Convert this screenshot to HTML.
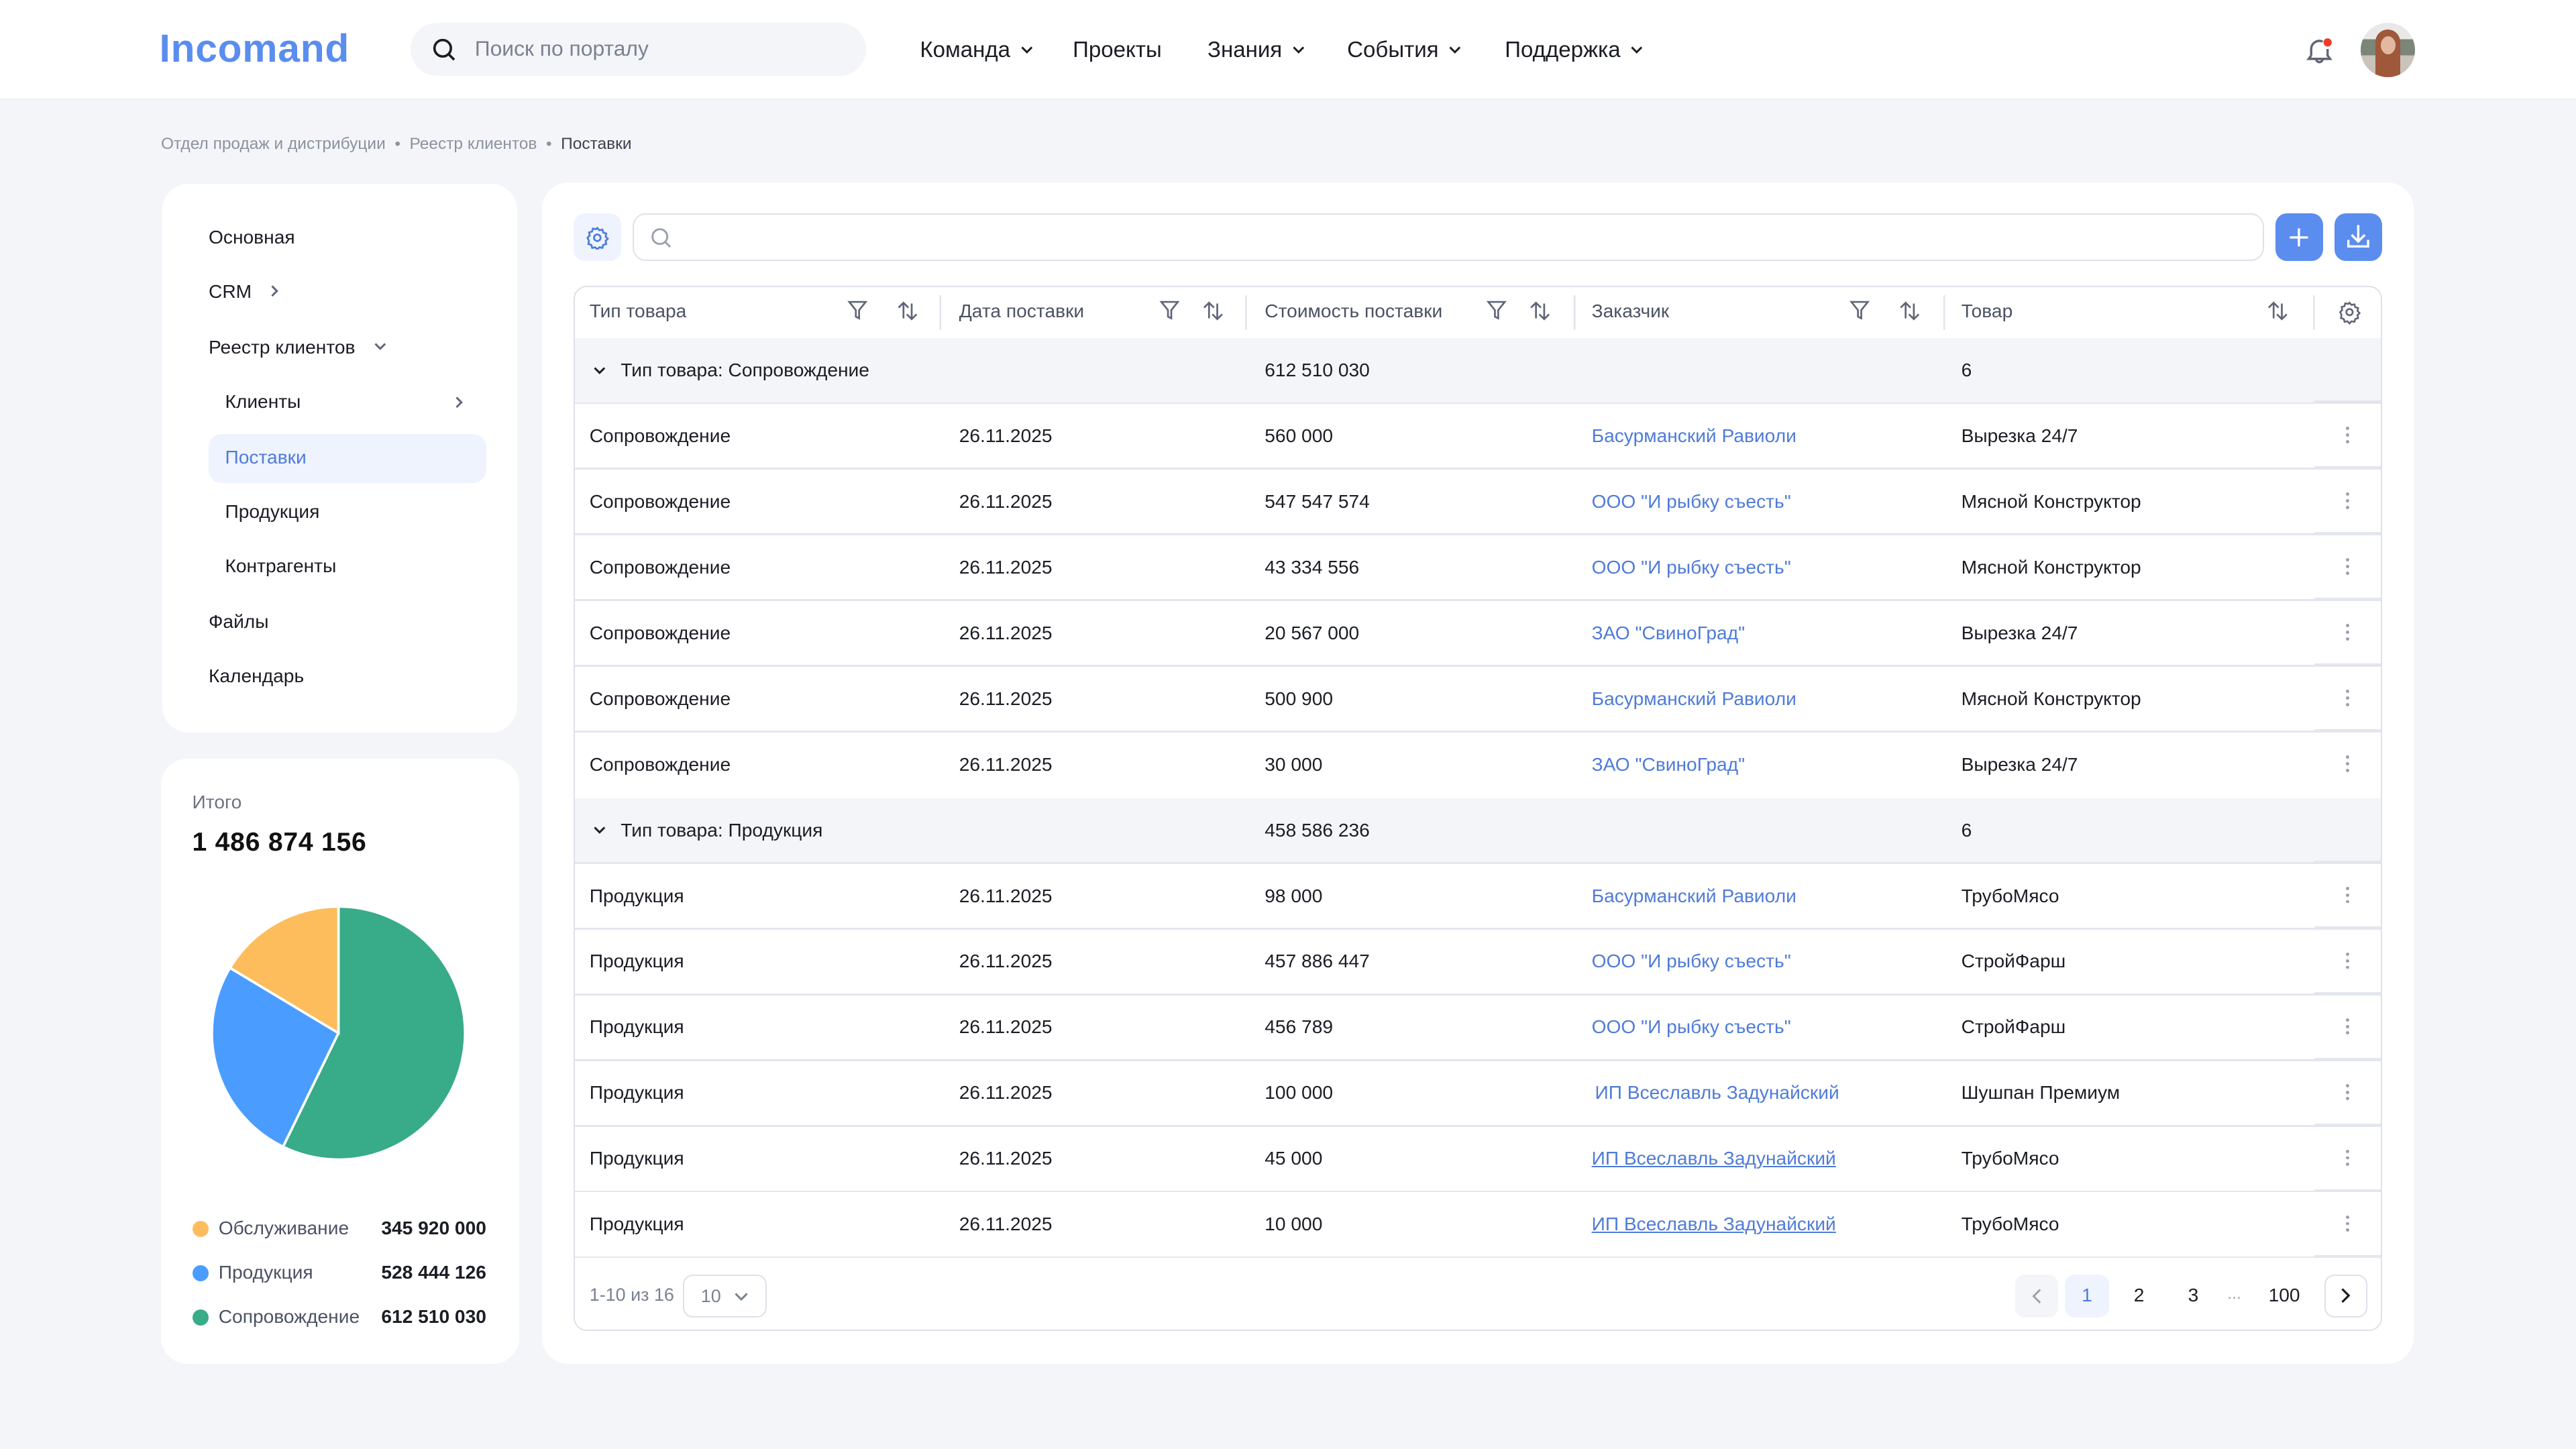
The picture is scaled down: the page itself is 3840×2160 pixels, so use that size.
<!DOCTYPE html>
<html><head><meta charset="utf-8">
<style>
html{zoom:2.44898}
*{box-sizing:border-box;margin:0;padding:0}
body{width:1568px;height:882px;background:#f4f5f9;font-family:"Liberation Sans","Noto Sans CJK SC",sans-serif;color:#1b1d24;position:relative;overflow:hidden}
.abs{position:absolute}
.hdr{left:0;top:0;width:1568px;height:61px;background:#fff;border-bottom:1px solid #eceef3}
.logo{left:97px;top:16px;font-size:24px;font-weight:bold;color:#5b8def;letter-spacing:0.3px}
.srch{left:250px;top:14px;width:277px;height:32px;background:#f4f5f9;border-radius:16px}
.srch span{position:absolute;left:39px;top:8px;font-size:13px;color:#7a8190}
.nav{top:23px;font-size:13.5px;color:#1b1d24}
.chev{display:inline-block;margin-left:6px;vertical-align:2px}
.card{background:#fff;border-radius:16px}
.bc{top:82px;left:98px;font-size:10px;color:#8b92a0}
.bc b{font-weight:normal;color:#3c4250}
.side div{position:absolute;font-size:11.5px;color:#1b1d24}
.tbl{left:349px;top:174px;width:1101px;height:636px;border:1px solid #dfe1ea;border-radius:8px;overflow:hidden;background:#fff}
.row{position:absolute;left:0;width:1101px;height:40px;font-size:11.5px}
.row div{position:absolute;top:13px}
.ln{position:absolute;left:0;width:1059px;height:1px;background:#e4e6ee}
.ln2{position:absolute;left:1059px;width:42px;height:2px;background:#e4e6ee}
.lnk{color:#4f7bd9}
.dots{left:1078px;top:14px!important;width:3px}
.dots i{display:block;width:2px;height:2px;border-radius:1px;background:#9aa0ad;margin-bottom:2px}
.hd{position:absolute;top:8px;font-size:11.5px;color:#4b5263}
</style></head><body>
<div class="abs hdr"></div>
<div class="abs logo">Incomand</div>
<div class="abs srch"><svg class="abs" style="left:13px;top:9px" width="15" height="15" viewBox="0 0 15 15"><circle cx="6.5" cy="6.5" r="5" fill="none" stroke="#1b1d24" stroke-width="1.5"/><path d="M10 10l3.5 3.5" stroke="#1b1d24" stroke-width="1.5"/></svg><span>Поиск по порталу</span></div>
<div class="abs nav" style="left:560px">Команда<svg class="chev" width="8" height="5"><path d="M1 1l3 3 3-3" fill="none" stroke="#1b1d24" stroke-width="1.2"/></svg></div>
<div class="abs nav" style="left:653px">Проекты</div>
<div class="abs nav" style="left:735px">Знания<svg class="chev" width="8" height="5"><path d="M1 1l3 3 3-3" fill="none" stroke="#1b1d24" stroke-width="1.2"/></svg></div>
<div class="abs nav" style="left:820px">События<svg class="chev" width="8" height="5"><path d="M1 1l3 3 3-3" fill="none" stroke="#1b1d24" stroke-width="1.2"/></svg></div>
<div class="abs nav" style="left:916px">Поддержка<svg class="chev" width="8" height="5"><path d="M1 1l3 3 3-3" fill="none" stroke="#1b1d24" stroke-width="1.2"/></svg></div>
<svg class="abs" style="left:1402px;top:21px" width="20" height="20" viewBox="0 0 20 20"><path d="M5 13V9a5 5 0 0 1 7-4.5M15 9v4l1.5 2h-13L5 13" fill="none" stroke="#5f6677" stroke-width="1.4"/><path d="M8 15a2 2 0 0 0 4 0" fill="none" stroke="#5f6677" stroke-width="1.4"/><circle cx="15" cy="5" r="2.5" fill="#f0392b"/></svg>
<div class="abs" style="left:1437px;top:14px;width:33px;height:33px;border-radius:50%;background:linear-gradient(#e8e8e8 0 30%,#7d8478 30% 60%,#c9c3bb 60%);overflow:hidden"><div style="position:absolute;left:9px;top:4px;width:15px;height:30px;border-radius:8px 8px 0 0;background:#a0583a"></div><div style="position:absolute;left:12px;top:8px;width:9px;height:11px;border-radius:50%;background:#e2b8a0"></div></div>

<div class="abs bc">Отдел продаж и дистрибуции &nbsp;•&nbsp; Реестр клиентов &nbsp;•&nbsp; <b>Поставки</b></div>

<div class="abs card side" style="left:99px;top:112px;width:216px;height:334px">
<div style="left:28px;top:26px">Основная</div>
<div style="left:28px;top:59px">CRM <svg style="margin-left:8px" width="6" height="8"><path d="M1 1l3 3-3 3" fill="none" stroke="#5f6677" stroke-width="1.2"/></svg></div>
<div style="left:28px;top:93px">Реестр клиентов <svg style="margin-left:8px;vertical-align:1px" width="8" height="6"><path d="M1 1l3 3 3-3" fill="none" stroke="#5f6677" stroke-width="1.2"/></svg></div>
<div style="left:38px;top:126px">Клиенты</div>
<svg class="abs" style="left:178px;top:129px" width="6" height="8"><path d="M1 1l3 3-3 3" fill="none" stroke="#5f6677" stroke-width="1.2"/></svg>
<div style="left:28px;top:152px;width:169px;height:30px;background:#eef3fe;border-radius:8px"></div>
<div style="left:38px;top:160px;color:#4f7bd9">Поставки</div>
<div style="left:38px;top:193px">Продукция</div>
<div style="left:38px;top:226px">Контрагенты</div>
<div style="left:28px;top:260px">Файлы</div>
<div style="left:28px;top:293px">Календарь</div>
</div>

<div class="abs card" style="left:98px;top:462px;width:218px;height:368px">
<div class="abs" style="left:19px;top:20px;font-size:11.5px;color:#6b7280">Итого</div>
<div class="abs" style="left:19px;top:42px;font-size:16px;font-weight:bold;color:#111;letter-spacing:0.3px">1 486 874 156</div>
<svg class="abs" style="left:0;top:0" width="218" height="260" viewBox="98 462 218 260">
<path d="M206,629 L206,552 A77,77 0 1 1 172.3,698.2 Z" fill="#38ab88" stroke="#fff" stroke-width="1.5"/>
<path d="M206,629 L172.3,698.2 A77,77 0 0 1 140,589.3 Z" fill="#4a9dff" stroke="#fff" stroke-width="1.5"/>
<path d="M206,629 L140,589.3 A77,77 0 0 1 206,552 Z" fill="#fdbd5c" stroke="#fff" stroke-width="1.5"/>
</svg>
<div class="abs" style="left:19px;top:281px;width:10px;height:10px;border-radius:50%;background:#fdbd5c"></div>
<div class="abs" style="left:35px;top:279px;font-size:11.5px;color:#4b5263">Обслуживание</div>
<div class="abs" style="right:20px;top:279px;font-size:11.5px;font-weight:bold">345 920 000</div>
<div class="abs" style="left:19px;top:308px;width:10px;height:10px;border-radius:50%;background:#4a9dff"></div>
<div class="abs" style="left:35px;top:306px;font-size:11.5px;color:#4b5263">Продукция</div>
<div class="abs" style="right:20px;top:306px;font-size:11.5px;font-weight:bold">528 444 126</div>
<div class="abs" style="left:19px;top:335px;width:10px;height:10px;border-radius:50%;background:#38ab88"></div>
<div class="abs" style="left:35px;top:333px;font-size:11.5px;color:#4b5263">Сопровождение</div>
<div class="abs" style="right:20px;top:333px;font-size:11.5px;font-weight:bold">612 510 030</div>
</div>

<div class="abs card" style="left:330px;top:111px;width:1139px;height:719px"></div>
<div class="abs" style="left:349px;top:130px;width:29px;height:29px;border-radius:7px;background:#eef3fe"><svg class="abs" style="left:7px;top:7px" width="15" height="15" viewBox="0 0 24 24"><path d="M12 2.5l2 2.2 3-.6.8 2.9 2.9.9-.6 3 2.1 2.1-2.1 2.1.6 3-2.9.9-.8 2.9-3-.6-2 2.2-2-2.2-3 .6-.8-2.9-2.9-.9.6-3L2.5 12l2.1-2.1-.6-3 2.9-.9.8-2.9 3 .6z" fill="none" stroke="#4f7bd9" stroke-width="1.8"/><circle cx="12" cy="12" r="3.2" fill="none" stroke="#4f7bd9" stroke-width="1.8"/></svg></div>
<div class="abs" style="left:385px;top:130px;width:993px;height:29px;border:1px solid #dfe1ea;border-radius:8px;background:#fff"><svg class="abs" style="left:10px;top:7px" width="14" height="14"><circle cx="6" cy="6" r="4.5" fill="none" stroke="#9aa0ad" stroke-width="1.2"/><path d="M9.3 9.3l3 3" stroke="#9aa0ad" stroke-width="1.2"/></svg></div>
<div class="abs" style="left:1385px;top:130px;width:29px;height:29px;border-radius:7px;background:#5b8def"><svg class="abs" style="left:8px;top:8px" width="13" height="13"><path d="M6.5 1v11M1 6.5h11" stroke="#fff" stroke-width="1.4"/></svg></div>
<div class="abs" style="left:1421px;top:130px;width:29px;height:29px;border-radius:7px;background:#5b8def"><svg class="abs" style="left:7px;top:6px" width="15" height="16"><path d="M7.5 1v10M3.5 7l4 4 4-4M1.5 10v4h12v-4" fill="none" stroke="#fff" stroke-width="1.4"/></svg></div>

<div class="abs tbl">
<div class="hd" style="left:9px">Тип товара</div>
<div class="hd" style="left:234px">Дата поставки</div>
<div class="hd" style="left:420px">Стоимость поставки</div>
<div class="hd" style="left:619px">Заказчик</div>
<div class="hd" style="left:844px">Товар</div>
<svg style="position:absolute;left:0;top:0" width="1101" height="31">
<defs><g id="f"><path d="M0 0h10l-4 5v5l-2-1V5z" fill="none" stroke="#5f6677" stroke-width="1.1"/></g><g id="s"><path d="M3 10V1M0 3.5L3 .5 6 3.5M8 1v9M5 7.5l3 3 3-3" fill="none" stroke="#5f6677" stroke-width="1.1"/></g></defs>
<use href="#f" x="167" y="9"/><use href="#s" x="197" y="9"/>
<use href="#f" x="357" y="9"/><use href="#s" x="383" y="9"/>
<use href="#f" x="556" y="9"/><use href="#s" x="582" y="9"/>
<use href="#f" x="777" y="9"/><use href="#s" x="807" y="9"/>
<use href="#s" x="1031" y="9"/>
<rect x="222" y="5" width="1" height="21" fill="#e1e3ea"/><rect x="408" y="5" width="1" height="21" fill="#e1e3ea"/><rect x="608" y="5" width="1" height="21" fill="#e1e3ea"/><rect x="833" y="5" width="1" height="21" fill="#e1e3ea"/><rect x="1058" y="5" width="1" height="21" fill="#e1e3ea"/>
<g transform="translate(1073,8) scale(0.6)" fill="none" stroke="#5f6677" stroke-width="1.8"><path d="M12 2.5l2 2.2 3-.6.8 2.9 2.9.9-.6 3 2.1 2.1-2.1 2.1.6 3-2.9.9-.8 2.9-3-.6-2 2.2-2-2.2-3 .6-.8-2.9-2.9-.9.6-3L2.5 12l2.1-2.1-.6-3 2.9-.9.8-2.9 3 .6z"/><circle cx="12" cy="12" r="3.2"/></g>
</svg>

<div class="row" style="top:31px;background:#f4f5f9;font-weight:500"><svg style="position:absolute;left:11px;top:17px" width="8" height="6"><path d="M1 1l3 3 3-3" fill="none" stroke="#1b1d24" stroke-width="1.2"/></svg><div style="left:28px">Тип товара: Сопровождение</div><div style="left:420px">612 510 030</div><div style="left:844px">6</div></div>
<div class="ln" style="top:70px"></div><div class="ln2" style="top:69px"></div>
<div class="row" style="top:71px"><div style="left:9px">Сопровождение</div><div style="left:234px">26.11.2025</div><div style="left:420px">560 000</div><div style="left:619px" class="lnk">Басурманский Равиоли</div><div style="left:844px">Вырезка 24/7</div><div class="dots"><i></i><i></i><i></i></div></div>
<div class="ln" style="top:110px"></div><div class="ln2" style="top:109px"></div>
<div class="row" style="top:111px"><div style="left:9px">Сопровождение</div><div style="left:234px">26.11.2025</div><div style="left:420px">547 547 574</div><div style="left:619px" class="lnk">ООО "И рыбку съесть"</div><div style="left:844px">Мясной Конструктор</div><div class="dots"><i></i><i></i><i></i></div></div>
<div class="ln" style="top:150px"></div><div class="ln2" style="top:149px"></div>
<div class="row" style="top:151px"><div style="left:9px">Сопровождение</div><div style="left:234px">26.11.2025</div><div style="left:420px">43 334 556</div><div style="left:619px" class="lnk">ООО "И рыбку съесть"</div><div style="left:844px">Мясной Конструктор</div><div class="dots"><i></i><i></i><i></i></div></div>
<div class="ln" style="top:190px"></div><div class="ln2" style="top:189px"></div>
<div class="row" style="top:191px"><div style="left:9px">Сопровождение</div><div style="left:234px">26.11.2025</div><div style="left:420px">20 567 000</div><div style="left:619px" class="lnk">ЗАО "СвиноГрад"</div><div style="left:844px">Вырезка 24/7</div><div class="dots"><i></i><i></i><i></i></div></div>
<div class="ln" style="top:230px"></div><div class="ln2" style="top:229px"></div>
<div class="row" style="top:231px"><div style="left:9px">Сопровождение</div><div style="left:234px">26.11.2025</div><div style="left:420px">500 900</div><div style="left:619px" class="lnk">Басурманский Равиоли</div><div style="left:844px">Мясной Конструктор</div><div class="dots"><i></i><i></i><i></i></div></div>
<div class="ln" style="top:270px"></div><div class="ln2" style="top:269px"></div>
<div class="row" style="top:271px"><div style="left:9px">Сопровождение</div><div style="left:234px">26.11.2025</div><div style="left:420px">30 000</div><div style="left:619px" class="lnk">ЗАО "СвиноГрад"</div><div style="left:844px">Вырезка 24/7</div><div class="dots"><i></i><i></i><i></i></div></div>
<div class="row" style="top:311px;background:#f4f5f9;font-weight:500"><svg style="position:absolute;left:11px;top:17px" width="8" height="6"><path d="M1 1l3 3 3-3" fill="none" stroke="#1b1d24" stroke-width="1.2"/></svg><div style="left:28px">Тип товара: Продукция</div><div style="left:420px">458 586 236</div><div style="left:844px">6</div></div>
<div class="ln" style="top:350px"></div><div class="ln2" style="top:349px"></div>
<div class="row" style="top:351px"><div style="left:9px">Продукция</div><div style="left:234px">26.11.2025</div><div style="left:420px">98 000</div><div style="left:619px" class="lnk">Басурманский Равиоли</div><div style="left:844px">ТрубоМясо</div><div class="dots"><i></i><i></i><i></i></div></div>
<div class="ln" style="top:390px"></div><div class="ln2" style="top:389px"></div>
<div class="row" style="top:391px"><div style="left:9px">Продукция</div><div style="left:234px">26.11.2025</div><div style="left:420px">457 886 447</div><div style="left:619px" class="lnk">ООО "И рыбку съесть"</div><div style="left:844px">СтройФарш</div><div class="dots"><i></i><i></i><i></i></div></div>
<div class="ln" style="top:430px"></div><div class="ln2" style="top:429px"></div>
<div class="row" style="top:431px"><div style="left:9px">Продукция</div><div style="left:234px">26.11.2025</div><div style="left:420px">456 789</div><div style="left:619px" class="lnk">ООО "И рыбку съесть"</div><div style="left:844px">СтройФарш</div><div class="dots"><i></i><i></i><i></i></div></div>
<div class="ln" style="top:470px"></div><div class="ln2" style="top:469px"></div>
<div class="row" style="top:471px"><div style="left:9px">Продукция</div><div style="left:234px">26.11.2025</div><div style="left:420px">100 000</div><div style="left:621px" class="lnk">ИП Всеславль Задунайский</div><div style="left:844px">Шушпан Премиум</div><div class="dots"><i></i><i></i><i></i></div></div>
<div class="ln" style="top:510px"></div><div class="ln2" style="top:509px"></div>
<div class="row" style="top:511px"><div style="left:9px">Продукция</div><div style="left:234px">26.11.2025</div><div style="left:420px">45 000</div><div style="left:619px;text-decoration:underline" class="lnk">ИП Всеславль Задунайский</div><div style="left:844px">ТрубоМясо</div><div class="dots"><i></i><i></i><i></i></div></div>
<div class="ln" style="top:550px"></div><div class="ln2" style="top:549px"></div>
<div class="row" style="top:551px"><div style="left:9px">Продукция</div><div style="left:234px">26.11.2025</div><div style="left:420px">10 000</div><div style="left:619px;text-decoration:underline" class="lnk">ИП Всеславль Задунайский</div><div style="left:844px">ТрубоМясо</div><div class="dots"><i></i><i></i><i></i></div></div>
<div class="ln" style="top:590px"></div><div class="ln2" style="top:589px"></div>
<div class="abs" style="left:9px;top:607px;font-size:11px;color:#7a8190">1-10 из 16</div>
<div class="abs" style="left:66px;top:601px;width:51px;height:26px;border:1px solid #dfe1ea;border-radius:6px;font-size:11px;color:#7a8190;padding:6px 0 0 10px">10 <svg style="margin-left:5px" width="9" height="6"><path d="M1 1l3.5 3.5L8 1" fill="none" stroke="#7a8190" stroke-width="1.2"/></svg></div>
<div class="abs" style="left:877px;top:601px;width:26px;height:26px;border-radius:6px;background:#f4f5f9"><svg class="abs" style="left:10px;top:8px" width="6" height="10"><path d="M5 1L1 5l4 4" fill="none" stroke="#9aa0ad" stroke-width="1.2"/></svg></div>
<div class="abs" style="left:907px;top:601px;width:27px;height:26px;border-radius:6px;background:#eef3fe;font-size:11.5px;color:#4f7bd9;text-align:center;padding-top:6px">1</div>
<div class="abs" style="left:949px;top:607px;font-size:11.5px">2</div>
<div class="abs" style="left:982px;top:607px;font-size:11.5px">3</div>
<div class="abs" style="left:1006px;top:607px;font-size:10px;color:#9aa0ad">...</div>
<div class="abs" style="left:1031px;top:607px;font-size:11.5px">100</div>
<div class="abs" style="left:1065px;top:601px;width:26px;height:26px;border-radius:6px;border:1px solid #dfe1ea"><svg class="abs" style="left:9px;top:7px" width="6" height="10"><path d="M1 1l4 4-4 4" fill="none" stroke="#1b1d24" stroke-width="1.3"/></svg></div>
</div>
</body></html>
